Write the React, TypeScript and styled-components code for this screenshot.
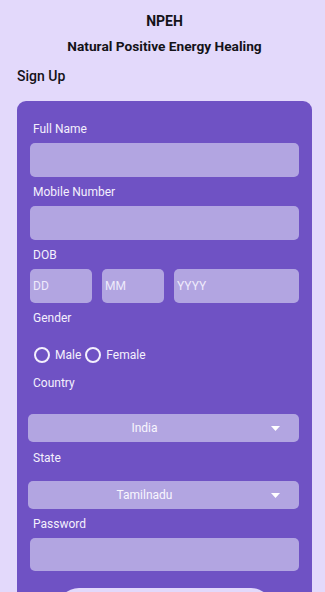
import React from 'react';
import styled, { createGlobalStyle } from 'styled-components';

const GlobalStyle = createGlobalStyle`
  html, body {
    margin: 0;
    padding: 0;
    background: #e3d9fb;
  }
  body {
    font-family: Roboto, "Noto Sans", "Liberation Sans", sans-serif;
    -webkit-font-smoothing: antialiased;
  }
  * { box-sizing: border-box; }
`;

const Page = styled.div`
  min-height: 100vh;
  padding: 12px 13px 40px 17px;
  background: #e3d9fb;
`;

const Brand = styled.div`
  text-align: center;
  font-size: 14px;
  line-height: 18px;
  font-weight: 700;
  color: #141218;
`;

const Tagline = styled(Brand)`
  margin-top: 7px;
  font-size: 13.7px;
`;

const Heading = styled.h2`
  margin: 11px 0 0;
  font-size: 14px;
  line-height: 20px;
  font-weight: 500;
  color: #141218;
`;

const Card = styled.div`
  margin-top: 15px;
  background: #6f52c4;
  border-radius: 9px;
  padding: 20px 13px 60px;
  display: flex;
  flex-direction: column;
`;

const Label = styled.label<{ $mt?: number; $mb?: number }>`
  display: block;
  margin: ${({ $mt = 7 }) => $mt}px 0 ${({ $mb = 6 }) => $mb}px 3px;
  font-size: 12px;
  line-height: 16px;
  color: #f4f0fd;
`;

const TextField = styled.input<{ $h?: number }>`
  display: block;
  width: 100%;
  height: ${({ $h = 34 }) => $h}px;
  border: none;
  outline: none;
  border-radius: 5px;
  background: #b2a5e1;
  padding: 0 3px;
  font-family: inherit;
  font-size: 12px;
  color: #fff;

  &::placeholder {
    color: #eeeafb;
  }
`;

const DobRow = styled.div`
  display: grid;
  grid-template-columns: 62px 62px 1fr;
  column-gap: 10px;
`;

const RadioRow = styled.div`
  margin: 11px 0 0 4px;
  height: 24px;
  display: flex;
  align-items: center;
`;

const RadioOption = styled.span`
  display: flex;
  align-items: center;
  margin-right: 4px;
  font-size: 12px;
  color: #f4f0fd;
`;

const RadioCircle = styled.span`
  width: 16px;
  height: 16px;
  border: 2px solid #f4f0fd;
  border-radius: 50%;
  margin-right: 5px;
`;

const Dropdown = styled.div`
  margin-left: -2px;
  height: 28px;
  border-radius: 5px;
  background: #b2a5e1;
  display: flex;
  align-items: center;
  font-size: 12px;
  color: #f8f6fe;
`;

const DropdownValue = styled.span`
  flex: 1;
  text-align: center;
`;

const Caret = styled.svg`
  width: 9px;
  height: 5px;
  margin: 0 19px 0 10px;
`;

const SubmitButton = styled.button`
  align-self: center;
  margin-top: 17px;
  width: 216px;
  height: 50px;
  border: none;
  border-radius: 22px;
  background: #e2d9fb;
  font-family: inherit;
  font-size: 13px;
  color: #4a3a8a;
`;

const Select: React.FC<{ value: string }> = ({ value }) => (
  <Dropdown>
    <DropdownValue>{value}</DropdownValue>
    <Caret viewBox="0 0 9 5">
      <path d="M0 0 L9 0 L4.5 5 Z" fill="#ffffff" />
    </Caret>
  </Dropdown>
);

const App: React.FC = () => {
  return (
    <>
      <GlobalStyle />
      <Page>
        <Brand>NPEH</Brand>
        <Tagline>Natural Positive Energy Healing</Tagline>
        <Heading>Sign Up</Heading>
        <Card>
          <Label $mt={0}>Full Name</Label>
          <TextField />

          <Label>Mobile Number</Label>
          <TextField />

          <Label>DOB</Label>
          <DobRow>
            <TextField placeholder="DD" />
            <TextField placeholder="MM" />
            <TextField placeholder="YYYY" />
          </DobRow>

          <Label>Gender</Label>
          <RadioRow>
            <RadioOption>
              <RadioCircle />
              Male
            </RadioOption>
            <RadioOption>
              <RadioCircle />
              Female
            </RadioOption>
          </RadioRow>

          <Label $mt={8} $mb={23}>Country</Label>
          <Select value="India" />

          <Label $mt={8} $mb={15}>State</Label>
          <Select value="Tamilnadu" />

          <Label>Password</Label>
          <TextField type="password" $h={33} />

          <SubmitButton>Sign Up</SubmitButton>
        </Card>
      </Page>
    </>
  );
};

export default App;
